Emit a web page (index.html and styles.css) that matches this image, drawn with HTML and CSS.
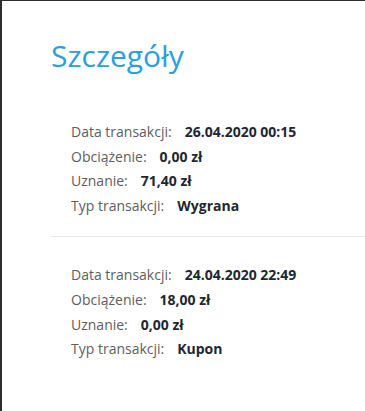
FILE: index.html
```html
<!DOCTYPE html>
<html lang="pl">
<head>
<meta charset="utf-8">
<link rel="stylesheet" href="styles.css">
</head>
<body>
<div class="panel">
  <h1 class="title">Szczegóły</h1>
  <div class="tx">
    <div class="row"><span class="label">Data transakcji:</span><span class="value">26.04.2020 00:15</span></div>
    <div class="row"><span class="label">Obciążenie:</span><span class="value">0,00 zł</span></div>
    <div class="row"><span class="label">Uznanie:</span><span class="value">71,40 zł</span></div>
    <div class="row"><span class="label">Typ transakcji:</span><span class="value">Wygrana</span></div>
  </div>
  <div class="tx">
    <div class="row"><span class="label">Data transakcji:</span><span class="value">24.04.2020 22:49</span></div>
    <div class="row"><span class="label">Obciążenie:</span><span class="value">18,00 zł</span></div>
    <div class="row"><span class="label">Uznanie:</span><span class="value">0,00 zł</span></div>
    <div class="row"><span class="label">Typ transakcji:</span><span class="value">Kupon</span></div>
  </div>
</div>
</body>
</html>
```
FILE: styles.css
```css
html, body {
  margin: 0;
  padding: 0;
  background: #ffffff;
}
body {
  font-family: "Open Sans", "Noto Sans", sans-serif;
}
.panel {
  box-sizing: border-box;
  height: 411px;
  border-top: 1px solid #2e2e2e;
  border-left: 2px solid #2e2e2e;
  padding: 38px 0 0 49px;
  overflow: hidden;
}
.title {
  margin: 0 0 20px 0;
  font-size: 30px;
  line-height: 34px;
  font-weight: 400;
  color: #2a9fdc;
}
.tx {
  padding: 27px 0 18px 20px;
}
.tx + .tx {
  border-top: 1px solid #e8e8e8;
  padding-top: 26px;
}
.row {
  display: flex;
  gap: 13px;
  font-size: 14px;
  line-height: 24.6px;
}
.label {
  color: #5e5e5e;
}
.value {
  font-weight: 700;
  color: #1e2733;
}
```
